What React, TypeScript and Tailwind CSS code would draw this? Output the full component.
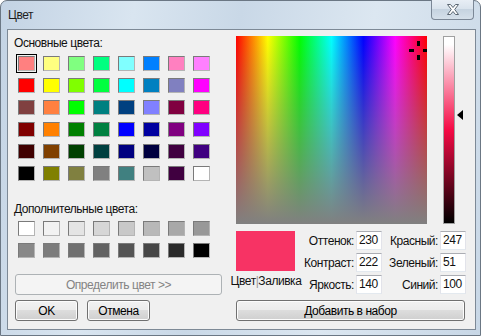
import React from "react";

const basic: string[] = [
  "#FF8080", "#FFFF80", "#80FF80", "#00FF80", "#80FFFF", "#0080FF", "#FF80C0", "#FF80FF",
  "#FF0000", "#FFFF00", "#80FF00", "#00FF40", "#00FFFF", "#0080C0", "#8080C0", "#FF00FF",
  "#804040", "#FF8040", "#00FF00", "#008080", "#004080", "#8080FF", "#800040", "#FF0080",
  "#800000", "#FF8000", "#008000", "#008040", "#0000FF", "#0000A0", "#800080", "#8000FF",
  "#400000", "#804000", "#004000", "#004040", "#000080", "#000040", "#400040", "#400080",
  "#000000", "#808000", "#808040", "#808080", "#408080", "#C0C0C0", "#400040", "#FFFFFF",
];

const custom: string[] = [
  "#FFFFFF", "#F2F2F2", "#E4E4E4", "#D6D6D6", "#C8C8C8", "#B8B8B8", "#A8A8A8", "#989898",
  "#888888", "#7C7C7C", "#707070", "#626262", "#545454", "#464646", "#2A2A2A", "#000000",
];

function Swatch({ color, selected }: { color: string; selected?: boolean }) {
  return (
    <div
      className={
        selected
          ? "w-[21px] h-[19px] flex items-center justify-center border border-black"
          : "w-[21px] h-[19px] flex items-center justify-center border border-transparent"
      }
    >
      <div
        className="w-[17px] h-[15px] border border-t-[#7a7a7a] border-l-[#7a7a7a] border-r-[#b4b4b4] border-b-[#b4b4b4]"
        style={{ backgroundColor: color }}
      />
    </div>
  );
}

function Field({ label, value }: { label: string; value: string }) {
  return (
    <div className="flex items-center justify-end h-[19px]">
      <span className="mr-[2px]">{label}</span>
      <div className="w-[26px] h-[19px] bg-white border border-t-[#abadb3] border-l-[#e2e3ea] border-r-[#e2e3ea] border-b-[#e3e9ef] pl-[2px] leading-[17px]">
        {value}
      </div>
    </div>
  );
}

const btn =
  "flex items-center justify-center rounded-[3px] border border-[#707070] bg-[linear-gradient(to_bottom,#f2f2f2_0%,#ebebeb_50%,#dddddd_50%,#cfcfcf_100%)] text-[#000] shadow-[inset_0_0_0_1px_#fcfcfc]";

export default function App() {
  return (
    <div className="w-[481px] h-[336px] overflow-hidden font-['Liberation_Sans',sans-serif] text-[12px] tracking-[-0.45px] text-[#111]">
      <div className="relative w-[481px] h-[336px] rounded-t-[7px] border border-[#6b7784] bg-[linear-gradient(100deg,#c3d3e4_0%,#d9e5f0_25%,#c9d8e7_45%,#dce7f1_70%,#c8d7e6_100%)] flex flex-col">
        {/* title bar */}
        <div className="h-[28px] flex items-center pl-[7px] text-[12px] text-[#1e1e1e]">
          Цвет
        </div>
        {/* close button */}
        <div className="absolute right-[6px] top-[-1px] w-[43px] h-[20px] rounded-b-[4px] border border-t-0 border-[#7b8796] bg-[linear-gradient(to_bottom,#e8eef5_0%,#d8e2ec_50%,#c6d3e0_50%,#d5e0ea_100%)] flex items-center justify-center">
          <svg width="14" height="11" viewBox="0 0 14 11">
            <path
              d="M1.5 0.5 H4.5 L7 3.5 L9.5 0.5 H12.5 L8.7 5.5 L12.5 10.5 H9.5 L7 7.5 L4.5 10.5 H1.5 L5.3 5.5 Z"
              fill="#ffffff"
              stroke="#5a6672"
              strokeWidth="1"
              strokeLinejoin="round"
            />
          </svg>
        </div>

        {/* client */}
        <div className="ml-[6px] w-[469px] h-[301px] border border-[#7d8996] bg-[#f0f0f0] flex">
          {/* left column */}
          <div className="w-[222px] flex flex-col">
            <div className="pl-[6px] mt-[5px] h-[16px] leading-[16px]">Основные цвета:</div>
            <div className="ml-[8px] mt-[3px] grid grid-cols-[repeat(8,21px)] gap-x-[4px] gap-y-[3px]">
              {basic.map((c, i) => (
                <Swatch key={i} color={c} selected={i === 0} />
              ))}
            </div>
            <div className="pl-[6px] mt-[18px] h-[16px] leading-[16px]">Дополнительные цвета:</div>
            <div className="ml-[8px] mt-[2px] grid grid-cols-[repeat(8,21px)] gap-x-[4px] gap-y-[3px]">
              {custom.map((c, i) => (
                <Swatch key={i} color={c} />
              ))}
            </div>
            <div className="ml-[7px] mt-[14px] w-[207px] h-[21px] rounded-[3px] border border-[#adb2b5] bg-[#f4f4f4] flex items-center justify-center text-[#838383]">
              Определить цвет &gt;&gt;
            </div>
            <div className="ml-[7px] mt-[5px] flex gap-[9px]">
              <div className={btn + " w-[63px] h-[21px]"}>OK</div>
              <div className={btn + " w-[63px] h-[21px]"}>Отмена</div>
            </div>
          </div>

          {/* right column */}
          <div className="flex-1 flex flex-col">
            <div className="relative ml-[6px] mt-[6px] flex">
              <div className="relative w-[191px] h-[188px] bg-[linear-gradient(to_bottom,rgba(128,128,128,0)_0%,#808080_100%),linear-gradient(to_right,#ff0000_0%,#ffff00_16.67%,#00ff00_33.33%,#00ffff_50%,#0000ff_66.67%,#ff00ff_83.33%,#ff0000_100%)] overflow-hidden">
                {/* crosshair */}
                <div className="absolute left-[181px] top-[5px] w-[3px] h-[5px] bg-black" />
                <div className="absolute left-[181px] top-[19px] w-[3px] h-[5px] bg-black" />
                <div className="absolute left-[173px] top-[13px] w-[5px] h-[3px] bg-black" />
                <div className="absolute left-[187px] top-[13px] w-[5px] h-[3px] bg-black" />
              </div>
              <div className="ml-[16px] w-[12px] h-[188px] border border-[#a0a0a0] bg-[linear-gradient(to_bottom,#ffffff_0%,#ffffff_4%,#f50a45_50%,#000000_100%)]" />
              <svg className="absolute left-[221px] top-[74px]" width="6" height="10" viewBox="0 0 6 10">
                <path d="M0 5 L6 0 V10 Z" fill="#000" />
              </svg>
            </div>

            <div className="flex mt-[7px]">
              <div className="w-[72px] flex flex-col items-center">
                <div className="w-[59px] h-[40px] bg-[#F73364] ml-[-2px]" />
                <div className="mt-[2px] h-[16px] leading-[16px] whitespace-nowrap">
                  Цвет<span className="text-[#9a9a9a]">|</span>Заливка
                </div>
              </div>
              <div className="w-[82px] flex flex-col gap-[3px] ml-[-2px]">
                <Field label="Оттенок:" value="230" />
                <Field label="Контраст:" value="222" />
                <Field label="Яркость:" value="140" />
              </div>
              <div className="w-[84px] flex flex-col gap-[3px]">
                <Field label="Красный:" value="247" />
                <Field label="Зеленый:" value="51" />
                <Field label="Синий:" value="100" />
              </div>
            </div>

            <div className={btn + " ml-[6px] mt-[6px] w-[229px] h-[21px]"}>Добавить в набор</div>
          </div>
        </div>
      </div>
    </div>
  );
}
